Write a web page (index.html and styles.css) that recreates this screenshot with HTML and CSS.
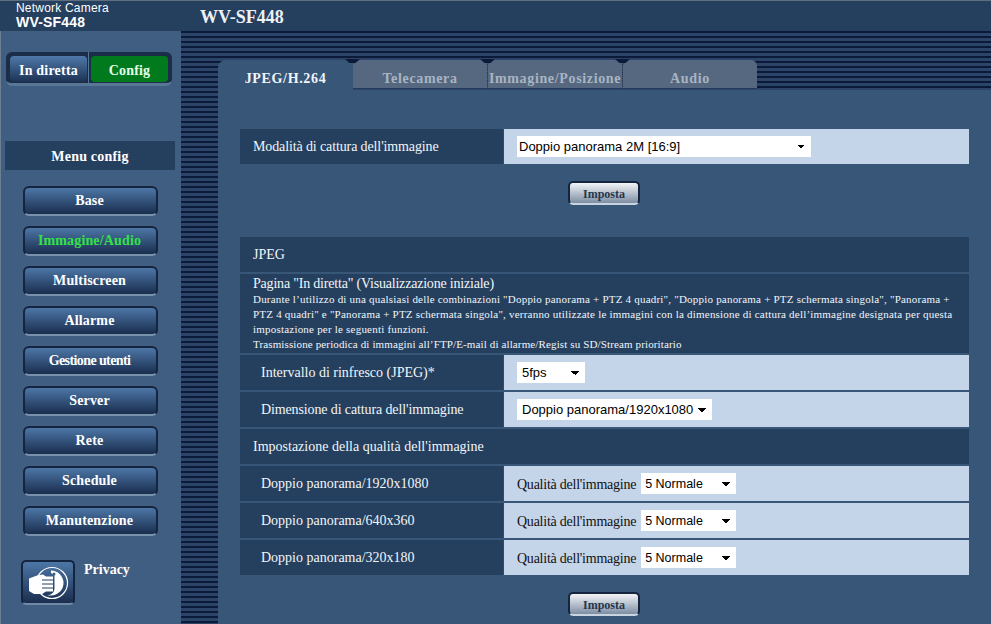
FILE: index.html
```html
<!DOCTYPE html>
<html lang="en">
<head>
  <meta charset="UTF-8">
  <title>WV-SF448</title>
  <link rel="stylesheet" href="styles.css">
</head>
<body>
  <div class="page">
    <header class="topbar">
      <div class="brand">
        <span class="brand-kind">Network Camera</span>
        <strong class="brand-model">WV-SF448</strong>
      </div>
      <h1 class="title">WV-SF448</h1>
    </header>

    <aside class="side">
      <div class="mode">
        <a class="mode-btn">In diretta</a>
        <span class="mode-sep"></span>
        <a class="mode-btn mode-btn--on">Config</a>
      </div>
      <h2 class="menu-title">Menu config</h2>
      <nav class="menu">
        <a class="menu-btn">Base</a>
        <a class="menu-btn menu-btn--on">Immagine/Audio</a>
        <a class="menu-btn">Multiscreen</a>
        <a class="menu-btn">Allarme</a>
        <a class="menu-btn menu-btn--tight">Gestione utenti</a>
        <a class="menu-btn">Server</a>
        <a class="menu-btn">Rete</a>
        <a class="menu-btn">Schedule</a>
        <a class="menu-btn">Manutenzione</a>
      </nav>
      <div class="privacy">
        <a class="privacy-btn">
          <svg width="44" height="36" viewBox="0 0 44 36">
            <circle cx="26" cy="18" r="15.5" fill="none" stroke="#fff" stroke-width="1.2"/>
            <path d="M25 5.5a12.5 12.5 0 0 1 0 25h-4c6-1 7.5-4 7.5-8V10l-3.5-2z" fill="#fff"/>
            <circle cx="28" cy="9" r="1.5" fill="#3a5f8c"/>
            <path d="M3 13.5 11 10.5 17 9.5 20 11.5H27V26.5H20L16 29H8L3 26z" fill="#fff"/>
            <path d="M16 15H28M16 19H28M16 23H28" stroke="#24406a" stroke-width="1.2" fill="none"/>
          </svg>
        </a>
        <a class="privacy-label">Privacy</a>
      </div>
    </aside>

    <main class="stage">
      <div class="tabs">
        <a class="tab tab--on">JPEG/H.264</a>
        <a class="tab">Telecamera</a>
        <a class="tab">Immagine/Posizione</a>
        <a class="tab">Audio</a>
      </div>

      <div class="panel">
        <div class="row">
          <div class="cell-label cell-label--flush cell-label--snug">Modalità di cattura dell'immagine</div>
          <div class="cell-value">
            <select class="pick pick--capture"><option>Doppio panorama 2M [16:9]</option></select>
          </div>
        </div>
        <div class="actions"><button class="set-btn" type="button">Imposta</button></div>

        <div class="rows">
          <div class="band">JPEG</div>
          <div class="note">
            <p class="note-head">Pagina "In diretta" (Visualizzazione iniziale)</p>
            <p class="note-text note-text--wide">Durante l’utilizzo di una qualsiasi delle combinazioni "Doppio panorama + PTZ 4 quadri", "Doppio panorama + PTZ schermata singola", "Panorama + PTZ 4 quadri" e "Panorama + PTZ schermata singola", verranno utilizzate le immagini con la dimensione di cattura dell’immagine designata per questa impostazione per le seguenti funzioni.</p>
            <p class="note-text">Trasmissione periodica di immagini all’FTP/E-mail di allarme/Regist su SD/Stream prioritario</p>
          </div>
          <div class="row">
            <div class="cell-label">Intervallo di rinfresco (JPEG)*</div>
            <div class="cell-value">
              <select class="pick pick--fps"><option>5fps</option></select>
            </div>
          </div>
          <div class="row">
            <div class="cell-label cell-label--snug">Dimensione di cattura dell'immagine</div>
            <div class="cell-value">
              <select class="pick pick--size"><option>Doppio panorama/1920x1080</option></select>
            </div>
          </div>
          <div class="band">Impostazione della qualità dell'immagine</div>
          <div class="row">
            <div class="cell-label">Doppio panorama/1920x1080</div>
            <div class="cell-value">
              <span class="quality-label">Qualità dell'immagine</span>
              <select class="pick pick--quality"><option>5 Normale</option></select>
            </div>
          </div>
          <div class="row">
            <div class="cell-label">Doppio panorama/640x360</div>
            <div class="cell-value">
              <span class="quality-label">Qualità dell'immagine</span>
              <select class="pick pick--quality"><option>5 Normale</option></select>
            </div>
          </div>
          <div class="row">
            <div class="cell-label">Doppio panorama/320x180</div>
            <div class="cell-value">
              <span class="quality-label">Qualità dell'immagine</span>
              <select class="pick pick--quality"><option>5 Normale</option></select>
            </div>
          </div>
        </div>
        <div class="actions"><button class="set-btn" type="button">Imposta</button></div>
      </div>
    </main>
  </div>
</body>
</html>
```

FILE: styles.css
```css
:root {
  --dark-blue: #25405f;
  --side-blue: #3f5e82;
  --panel-blue: #375678;
  --value-blue: #c5d5e9;
  --text: #f2f5f9;
}
* {
  box-sizing: border-box;
  margin: 0;
  padding: 0;
}
html, body {
  height: 100%;
  overflow: hidden;
}
body {
  background-color: var(--panel-blue);
  color: var(--text);
  font-family: "Liberation Serif", serif;
  font-size: 14px;
}
.page {
  display: grid;
  grid-template-columns: 181px 1fr;
  grid-template-rows: 31px 1fr;
  height: 624px;
}

/* Header */

.topbar {
  grid-column: 1 / 3;
  display: flex;
  background-color: var(--dark-blue);
  border-top: 1px solid #5f6f80;
}
.brand {
  width: 200px;
  padding-top: 1px;
  padding-left: 16px;
  display: flex;
  flex-direction: column;
  font-family: "Liberation Sans", sans-serif;
  color: #fff;
}
.brand-kind {
  font-size: 12px;
  line-height: 13px;
  letter-spacing: 0.2px;
}
.brand-model {
  font-size: 14px;
  line-height: 15px;
  letter-spacing: 0.2px;
}
.title {
  font-size: 18px;
  line-height: 32px;
  font-weight: bold;
  color: #eef1f5;
}

/* Sidebar */

.side {
  background-color: var(--side-blue);
  border-left: 1px solid #6d7f90;
  padding-top: 21px;
  display: flex;
  flex-direction: column;
  align-items: flex-start;
}
.mode {
  display: flex;
  width: 166px;
  height: 34px;
  margin-left: 5px;
  padding: 4px 4px 0;
  border-bottom: 3px solid #587797;
  border-radius: 6px;
  background-color: #1b2d48;
}
.mode-btn {
  width: 77px;
  height: 26px;
  border-radius: 4px;
  background: linear-gradient(#4f79aa, #1c3253);
  font-size: 14px;
  font-weight: bold;
  line-height: 30px;
  letter-spacing: 0.2px;
  text-align: center;
  color: #fff;
}
.mode-btn--on {
  background: #007a1c;
  color: #e6ffe6;
}
.mode-sep {
  width: 1px;
  margin: -4px 2px -3px 1px;
  background-color: #587797;
}
.menu-title {
  width: 170px;
  height: 29px;
  margin-top: 55px;
  margin-left: 4px;
  background-color: var(--dark-blue);
  font-size: 14px;
  font-weight: bold;
  line-height: 32px;
  letter-spacing: 0.2px;
  text-align: center;
  color: #fff;
}
.menu {
  display: flex;
  flex-direction: column;
  gap: 10px;
  margin-top: 16px;
  margin-left: 22px;
}
.menu-btn {
  width: 135px;
  height: 30px;
  padding-right: 2px;
  border: 2px solid #15253f;
  border-bottom-color: #7a93ad;
  border-radius: 6px;
  background: linear-gradient(#4c76a6, #1a2e4e);
  font-size: 14px;
  font-weight: bold;
  line-height: 25px;
  letter-spacing: 0.15px;
  text-align: center;
  color: #fff;
}
.menu-btn--on {
  color: #35e04a;
}
.menu-btn--tight {
  letter-spacing: -0.6px;
}
.privacy {
  display: flex;
  margin-top: 24px;
  margin-left: 20px;
}
.privacy-btn {
  display: flex;
  align-items: center;
  justify-content: center;
  width: 54px;
  height: 45px;
  border: 2px solid #15253f;
  border-bottom-color: #6f89a6;
  border-radius: 5px;
  background: linear-gradient(#4d77a7, #1a2e4e);
}
.privacy-label {
  margin-left: 9px;
  font-weight: bold;
  line-height: 20px;
  color: #fff;
}

/* Main area */

.stage {
  padding-top: 29px;
  padding-left: 37px;
  background-color: #2c4568;
  background-image: repeating-linear-gradient(#0b1a38 0 2px, #2b4468 2px 5px);
  display: flex;
  flex-direction: column;
  min-width: 0;
}
.tabs {
  display: flex;
  height: 30px;
}
.tab {
  position: relative;
  width: 135px;
  height: 29px;
  border-right: 1px dotted #15253f;
  border-bottom: 1px solid #243c5c;
  border-radius: 6px 6px 0 0;
  background-color: #556880;
  font-size: 14px;
  font-weight: bold;
  line-height: 38px;
  letter-spacing: 0.65px;
  text-align: center;
  color: #a9b4c2;
}
/* dark notch where two tabs meet */
.tab::before {
  content: "";
  position: absolute;
  top: -1px;
  left: -8px;
  width: 15px;
  height: 4px;
  background-color: #0b1a38;
  clip-path: polygon(0 0, 100% 0, 70% 100%, 30% 100%);
}
.tab:last-child {
  width: 134px;
  border-right: 0;
}
.tab--on {
  height: 30px;
  border: 0;
  border-radius: 8px 0 0 0;
  background-color: var(--panel-blue);
  color: #f2f5f9;
}
.tab--on::before {
  display: none;
}
.panel {
  flex: 1;
  padding: 39px 22px 0;
  background-color: var(--panel-blue);
}
.rows {
  display: flex;
  flex-direction: column;
  gap: 2px;
}
.row {
  display: grid;
  grid-template-columns: 264px 1fr;
  height: 35px;
}
.cell-label {
  padding-left: 21px;
  background-color: var(--dark-blue);
  border-right: 1px solid #2f4c70;
  line-height: 35px;
}
.cell-label--flush {
  padding-left: 13px;
}
.cell-label--snug {
  letter-spacing: -0.12px;
}
.cell-value {
  display: flex;
  align-items: center;
  gap: 5px;
  padding-left: 13px;
  background-color: var(--value-blue);
}
.band {
  height: 35px;
  padding-left: 13px;
  background-color: var(--dark-blue);
  line-height: 35px;
}
.note {
  height: 79px;
  padding: 2px 13px 0;
  background-color: var(--dark-blue);
}
.note-head {
  font-size: 14px;
  line-height: 16px;
  letter-spacing: -0.2px;
}
.note-text {
  font-size: 11px;
  line-height: 15px;
  letter-spacing: 0.13px;
}
.note-text--wide {
  letter-spacing: 0.21px;
}
.quality-label {
  font-size: 14px;
  letter-spacing: -0.24px;
  color: #111;
  padding-top: 3px;
}

/* Form controls */

.pick {
  appearance: none;
  height: 21px;
  padding-left: 5px;
  border: 0;
  border-radius: 0;
  font-family: "Liberation Sans", sans-serif;
  font-size: 13px;
  color: #000;
  background-color: #fff;
  background-image:
    linear-gradient(45deg, transparent 50%, #000 50%),
    linear-gradient(-45deg, transparent 50%, #000 50%);
  background-repeat: no-repeat;
  background-size: 4px 4px;
  background-position: right 10px center, right 6px center;
}
.pick--capture {
  width: 294px;
  padding-left: 2px;
}
.pick--fps {
  width: 68px;
}
.pick--size {
  width: 195px;
}
.pick--quality {
  width: 95px;
  padding-left: 4px;
  font-size: 12.5px;
}
.actions {
  display: flex;
  justify-content: center;
  margin-top: 17px;
  margin-bottom: 32px;
}
.set-btn {
  width: 72px;
  height: 24px;
  margin-right: 1px;
  padding-top: 2px;
  border: 2px solid #15253f;
  border-bottom-color: #c9d4e0;
  border-radius: 5px;
  background: linear-gradient(#f2f4f7, #7d8ea3);
  font-family: "Liberation Serif", serif;
  font-size: 12px;
  font-weight: bold;
  color: #27364a;
}
```
